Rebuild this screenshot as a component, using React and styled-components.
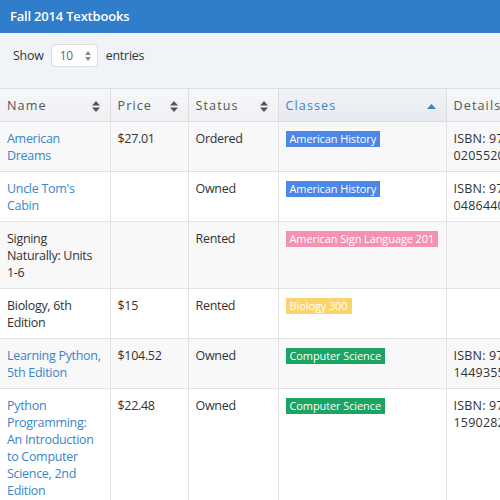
import styled, { createGlobalStyle } from "styled-components";

const GlobalStyle = createGlobalStyle`
  body {
    margin: 0;
    overflow: hidden;
    font-family: "Open Sans", "DejaVu Sans", sans-serif;
    background: #fff;
    color: #333;
  }
`;

const TitleBar = styled.header`
  height: 33px;
  background: #2f7dcb;
  color: #fff;
  font-size: 13px;
  font-weight: 600;
  letter-spacing: -0.2px;
  line-height: 32px;
  padding: 0 10px;
`;

const Controls = styled.div`
  display: flex;
  align-items: center;
  gap: 7px;
  height: 56px;
  padding: 0 13px 10px;
  background: #f0f3f8;
  border-bottom: 1px solid #dedede;
  font-size: 12.4px;
  letter-spacing: -0.2px;
  color: #333;
  box-sizing: border-box;
`;

const Select = styled.div`
  display: flex;
  align-items: center;
  justify-content: space-between;
  width: 47px;
  height: 23px;
  box-sizing: border-box;
  padding: 0 6px 0 8px;
  background: #fff;
  border: 1px solid #dcdcdc;
  border-radius: 4px;
  font-size: 12px;
  color: #666;
  margin-right: 1px;
`;

const Table = styled.table`
  border-collapse: collapse;
  table-layout: fixed;
  width: 580px;
  font-size: 12.5px;
  letter-spacing: -0.3px;
  line-height: 17px;
`;

const Th = styled.th`
  text-align: left;
  font-weight: 400;
  font-size: 12.6px;
  letter-spacing: 1.1px;
  color: ${(p) => (p.$active ? "#3a83cc" : "#555")};
  background: ${(p) =>
    p.$active
      ? "linear-gradient(#f0f2f6, #e6e9ee)"
      : "linear-gradient(#f6f7f9, #eef0f3)"};
  padding: 9px 10px 7px 7px;
  line-height: 16px;
  border-left: 1px solid #dedede;
  border-bottom: 1px solid #dedede;
  &:first-child {
    border-left: none;
  }
`;

const HeadInner = styled.div`
  display: flex;
  align-items: center;
  justify-content: space-between;
  white-space: nowrap;
  overflow: hidden;
`;

const Row = styled.tr`
  background: ${(p) => (p.$striped ? "#f8f8f8" : "#fff")};
`;

const Td = styled.td`
  vertical-align: top;
  padding: 8px 7px 7px;
  border-left: 1px solid #e2e2e2;
  border-bottom: 1px solid #e2e2e2;
  &:first-child {
    border-left: none;
  }
`;

const Details = styled.span`
  letter-spacing: 0.2px;
`;

const Link = styled.a`
  color: #3a84cc;
  text-decoration: none;
`;

const Badge = styled.span`
  display: inline-block;
  padding: 0 4px;
  margin-top: 1px;
  font-size: 11px;
  line-height: 16px;
  font-weight: 400;
  letter-spacing: -0.1px;
  color: #fff;
  background: ${(p) => p.$color};
  white-space: nowrap;
`;

const colors = {
  blue: "#4a87e7",
  pink: "#f591b3",
  yellow: "#fcd46e",
  green: "#1ba462",
};

const books = [
  { name: "American Dreams", link: true, price: "$27.01", status: "Ordered", cls: "American History", color: "blue", isbn: "ISBN: 978-0205520992" },
  { name: "Uncle Tom's Cabin", link: true, price: "", status: "Owned", cls: "American History", color: "blue", isbn: "ISBN: 978-0486440286" },
  { name: "Signing Naturally: Units 1-6", link: false, price: "", status: "Rented", cls: "American Sign Language 201", color: "pink", isbn: "" },
  { name: "Biology, 6th Edition", link: false, price: "$15", status: "Rented", cls: "Biology 300", color: "yellow", isbn: "" },
  { name: "Learning Python, 5th Edition", link: true, price: "$104.52", status: "Owned", cls: "Computer Science", color: "green", isbn: "ISBN: 978-1449355739" },
  { name: "Python Programming: An Introduction to Computer Science, 2nd Edition", link: true, price: "$22.48", status: "Owned", cls: "Computer Science", color: "green", isbn: "ISBN: 978-1590282410" },
];

function SortBoth() {
  return (
    <svg width="8" height="11" viewBox="0 0 8 11">
      <path d="M4 0 L8 4.5 L0 4.5 Z M4 11 L8 6.5 L0 6.5 Z" fill="#555" />
    </svg>
  );
}

function SortUp() {
  return (
    <svg width="9" height="5" viewBox="0 0 9 5">
      <path d="M4.5 0 L9 5 L0 5 Z" fill="#3a83cc" />
    </svg>
  );
}

function Arrows() {
  return (
    <svg width="6" height="10" viewBox="0 0 6 10">
      <path d="M3 0 L6 4 L0 4 Z M3 10 L6 6 L0 6 Z" fill="#888" />
    </svg>
  );
}

export default function App() {
  return (
    <div>
      <GlobalStyle />
      <TitleBar>Fall 2014 Textbooks</TitleBar>
      <Controls>
        <span>Show</span>
        <Select>
          <span>10</span>
          <Arrows />
        </Select>
        <span>entries</span>
      </Controls>
      <Table>
        <colgroup>
          <col style={{ width: 110 }} />
          <col style={{ width: 78 }} />
          <col style={{ width: 90 }} />
          <col style={{ width: 168 }} />
          <col style={{ width: 134 }} />
        </colgroup>
        <thead>
          <tr>
            <Th><HeadInner>Name<SortBoth /></HeadInner></Th>
            <Th><HeadInner>Price<SortBoth /></HeadInner></Th>
            <Th><HeadInner>Status<SortBoth /></HeadInner></Th>
            <Th $active><HeadInner>Classes<SortUp /></HeadInner></Th>
            <Th><HeadInner>Details</HeadInner></Th>
          </tr>
        </thead>
        <tbody>
          {books.map((b, i) => (
            <Row key={b.name} $striped={i % 2 === 0}>
              <Td>{b.link ? <Link href="#">{b.name}</Link> : b.name}</Td>
              <Td>{b.price}</Td>
              <Td>{b.status}</Td>
              <Td><Badge $color={colors[b.color]}>{b.cls}</Badge></Td>
              <Td><Details>{b.isbn.replace("978-", "978-\u200b")}</Details></Td>
            </Row>
          ))}
        </tbody>
      </Table>
    </div>
  );
}
